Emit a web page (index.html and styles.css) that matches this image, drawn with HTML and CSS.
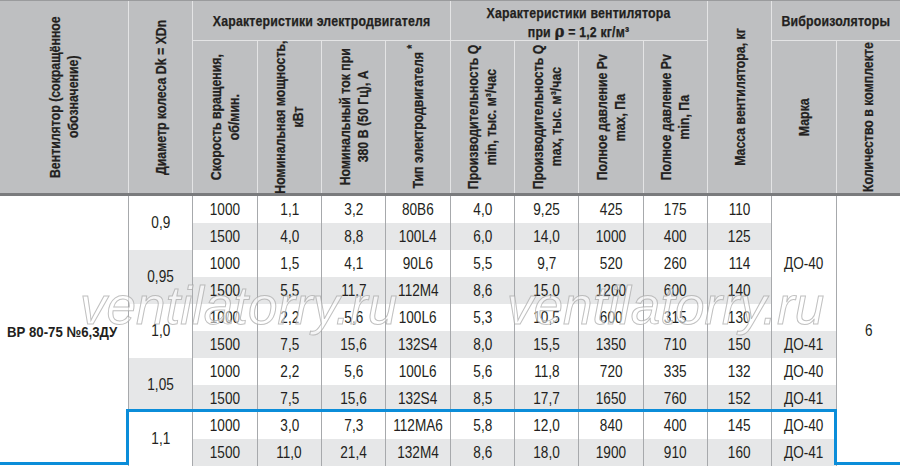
FILE: index.html
```html
<!DOCTYPE html>
<html lang="ru">
<head>
<meta charset="utf-8">
<title>ВР 80-75 №6,3ДУ</title>
<link rel="stylesheet" href="styles.css">
</head>
<body>
<div class="sheet">
  <div class="head">
    <div class="hc tall"><span class="vt">Вентилятор (сокращённое<br>обозначение)</span></div>
    <div class="hc tall"><span class="vt">Диаметр колеса Dk = XDn</span></div>
    <div class="hc span4"><span class="gt">Характеристики электродвигателя</span></div>
    <div class="hc span4"><span class="gt two">Характеристики вентилятора<br>при <span class="rho">ρ</span> = 1,2 кг/м³</span></div>
    <div class="hc tall"><span class="vt">Масса вентилятора, кг</span></div>
    <div class="hc span2"><span class="gt">Виброизоляторы</span></div>
    <div class="hc"><span class="vt">Скорость вращения,<br>об/мин.</span></div>
    <div class="hc"><span class="vt">Номинальная мощность,<br>кВт</span></div>
    <div class="hc"><span class="vt">Номинальный ток при<br>380 В (50 Гц), А</span></div>
    <div class="hc"><span class="vt">Тип электродвигателя <sup>*</sup></span></div>
    <div class="hc"><span class="vt">Производительность Q<br>min, тыс. м³/час</span></div>
    <div class="hc"><span class="vt">Производительность Q<br>max, тыс. м³/час</span></div>
    <div class="hc"><span class="vt">Полное давление Pv<br>max, Па</span></div>
    <div class="hc"><span class="vt">Полное давление Pv<br>min, Па</span></div>
    <div class="hc"><span class="vt">Марка</span></div>
    <div class="hc"><span class="vt">Количество в комплекте</span></div>
  </div>

  <div class="body">
    <div class="c name r10"><span>ВР 80-75 №6,3ДУ</span></div>
    <div class="c r2"><span>0,9</span></div>
    <div class="c"><span>1000</span></div><div class="c"><span>1,1</span></div><div class="c"><span>3,2</span></div><div class="c"><span>80B6</span></div><div class="c"><span>4,0</span></div><div class="c"><span>9,25</span></div><div class="c"><span>425</span></div><div class="c"><span>175</span></div><div class="c"><span>110</span></div>
    <div class="c r5"><span>ДО-40</span></div>
    <div class="c r10"><span>6</span></div>
    <div class="c g"><span>1500</span></div><div class="c g"><span>4,0</span></div><div class="c g"><span>8,8</span></div><div class="c g"><span>100L4</span></div><div class="c g"><span>6,0</span></div><div class="c g"><span>14,0</span></div><div class="c g"><span>1000</span></div><div class="c g"><span>400</span></div><div class="c g"><span>125</span></div>

    <div class="c r2 g"><span>0,95</span></div>
    <div class="c"><span>1000</span></div><div class="c"><span>1,5</span></div><div class="c"><span>4,1</span></div><div class="c"><span>90L6</span></div><div class="c"><span>5,5</span></div><div class="c"><span>9,7</span></div><div class="c"><span>520</span></div><div class="c"><span>260</span></div><div class="c"><span>114</span></div>
    <div class="c g"><span>1500</span></div><div class="c g"><span>5,5</span></div><div class="c g"><span>11,7</span></div><div class="c g"><span>112M4</span></div><div class="c g"><span>8,6</span></div><div class="c g"><span>15,0</span></div><div class="c g"><span>1200</span></div><div class="c g"><span>600</span></div><div class="c g"><span>140</span></div>

    <div class="c r2"><span>1,0</span></div>
    <div class="c"><span>1000</span></div><div class="c"><span>2,2</span></div><div class="c"><span>5,6</span></div><div class="c"><span>100L6</span></div><div class="c"><span>5,3</span></div><div class="c"><span>10,5</span></div><div class="c"><span>600</span></div><div class="c"><span>315</span></div><div class="c"><span>130</span></div>
    <div class="c g"><span>1500</span></div><div class="c g"><span>7,5</span></div><div class="c g"><span>15,6</span></div><div class="c g"><span>132S4</span></div><div class="c g"><span>8,0</span></div><div class="c g"><span>15,5</span></div><div class="c g"><span>1350</span></div><div class="c g"><span>710</span></div><div class="c g"><span>150</span></div><div class="c g"><span>ДО-41</span></div>

    <div class="c r2 g"><span>1,05</span></div>
    <div class="c"><span>1000</span></div><div class="c"><span>2,2</span></div><div class="c"><span>5,6</span></div><div class="c"><span>100L6</span></div><div class="c"><span>5,6</span></div><div class="c"><span>11,8</span></div><div class="c"><span>720</span></div><div class="c"><span>335</span></div><div class="c"><span>132</span></div><div class="c"><span>ДО-40</span></div>
    <div class="c g"><span>1500</span></div><div class="c g"><span>7,5</span></div><div class="c g"><span>15,6</span></div><div class="c g"><span>132S4</span></div><div class="c g"><span>8,5</span></div><div class="c g"><span>17,7</span></div><div class="c g"><span>1650</span></div><div class="c g"><span>760</span></div><div class="c g"><span>152</span></div><div class="c g"><span>ДО-41</span></div>

    <div class="c r2"><span>1,1</span></div>
    <div class="c"><span>1000</span></div><div class="c"><span>3,0</span></div><div class="c"><span>7,3</span></div><div class="c"><span>112MA6</span></div><div class="c"><span>5,8</span></div><div class="c"><span>12,0</span></div><div class="c"><span>840</span></div><div class="c"><span>400</span></div><div class="c"><span>145</span></div><div class="c"><span>ДО-40</span></div>
    <div class="c g"><span>1500</span></div><div class="c g"><span>11,0</span></div><div class="c g"><span>21,4</span></div><div class="c g"><span>132M4</span></div><div class="c g"><span>8,6</span></div><div class="c g"><span>18,0</span></div><div class="c g"><span>1900</span></div><div class="c g"><span>910</span></div><div class="c g"><span>160</span></div><div class="c g"><span>ДО-41</span></div>
  </div>

  <div class="wm wm1">ventilatorry.ru</div>
  <div class="wm wm2">ventilatorry.ru</div>

  <svg class="hl" width="900" height="466" viewBox="0 0 900 466">
    <polyline points="0,463.5 127.5,463.5 127.5,410.5 835.5,410.5 835.5,463.5 900,463.5" fill="none" stroke="#0b8dd9" stroke-width="3"/>
  </svg>
</div>
</body>
</html>
```

FILE: styles.css
```css
html, body {
  margin: 0;
  padding: 0;
  background: #ffffff;
}

.sheet {
  position: relative;
  width: 900px;
  height: 466px;
  overflow: hidden;
  color: #231f20;
  font-family: "Liberation Sans", Arial, sans-serif;
}

.head {
  display: grid;
  grid-template-columns: 128px repeat(12, 1fr);
  grid-template-rows: 39px 152px;
  gap: 1px;
  background: #e4e4e5;
  border-top: 1px solid #9a9b9d;
  border-bottom: 3px solid #7a7b7d;
}

.hc {
  background: #bebfc1;
  display: flex;
  align-items: center;
  justify-content: center;
  font-weight: bold;
  font-size: 14px;
  line-height: 18px;
  text-align: center;
  overflow: hidden;
  -webkit-text-stroke: 0.25px #231f20;
}

.tall { grid-row: span 2; }
.span4 { grid-column: span 4; }
.span2 { grid-column: span 2; }

.gt {
  display: inline-block;
  white-space: nowrap;
  transform: scaleX(0.88);
  letter-spacing: 0.2px;
}

.gt.two {
  padding-top: 3px;
}

.rho {
  font-family: "DejaVu Serif", serif;
  font-size: 17px;
  font-weight: bold;
}

.vt {
  writing-mode: vertical-rl;
  font-size: 14.5px;
  transform: rotate(180deg) scaleY(0.85);
  white-space: nowrap;
  text-align: center;
}

.vt sup {
  font-size: 12px;
  line-height: 0;
}

.body {
  display: grid;
  grid-template-columns: 128px repeat(12, 1fr);
  grid-auto-rows: 27px;
  column-gap: 1px;
  background: #a7a9ac;
}

.c {
  background: #ffffff;
  display: flex;
  align-items: center;
  justify-content: center;
  font-size: 17px;
  white-space: nowrap;
  overflow: hidden;
}

.c > span {
  display: inline-block;
  transform: scaleX(0.8);
}

.c.g {
  background: #e6e7e8;
}

.r2 { grid-row: span 2; }
.r5 { grid-row: span 5; }
.r10 { grid-row: span 10; }

.name {
  justify-content: flex-start;
  padding-left: 7px;
  font-weight: bold;
  font-size: 15px;
}

.name > span {
  transform: scaleX(0.88);
  transform-origin: left center;
}

.wm {
  position: absolute;
  top: 277px;
  font-family: "Liberation Sans", Arial, sans-serif;
  font-style: italic;
  font-size: 53px;
  line-height: 58px;
  color: rgba(255, 255, 255, 0.55);
  -webkit-text-stroke: 1px rgba(165, 165, 165, 0.7);
  pointer-events: none;
  white-space: nowrap;
}

.wm1 { left: 80px; }
.wm2 { left: 507px; }

.hl {
  position: absolute;
  left: 0;
  top: 0;
  pointer-events: none;
}
```
